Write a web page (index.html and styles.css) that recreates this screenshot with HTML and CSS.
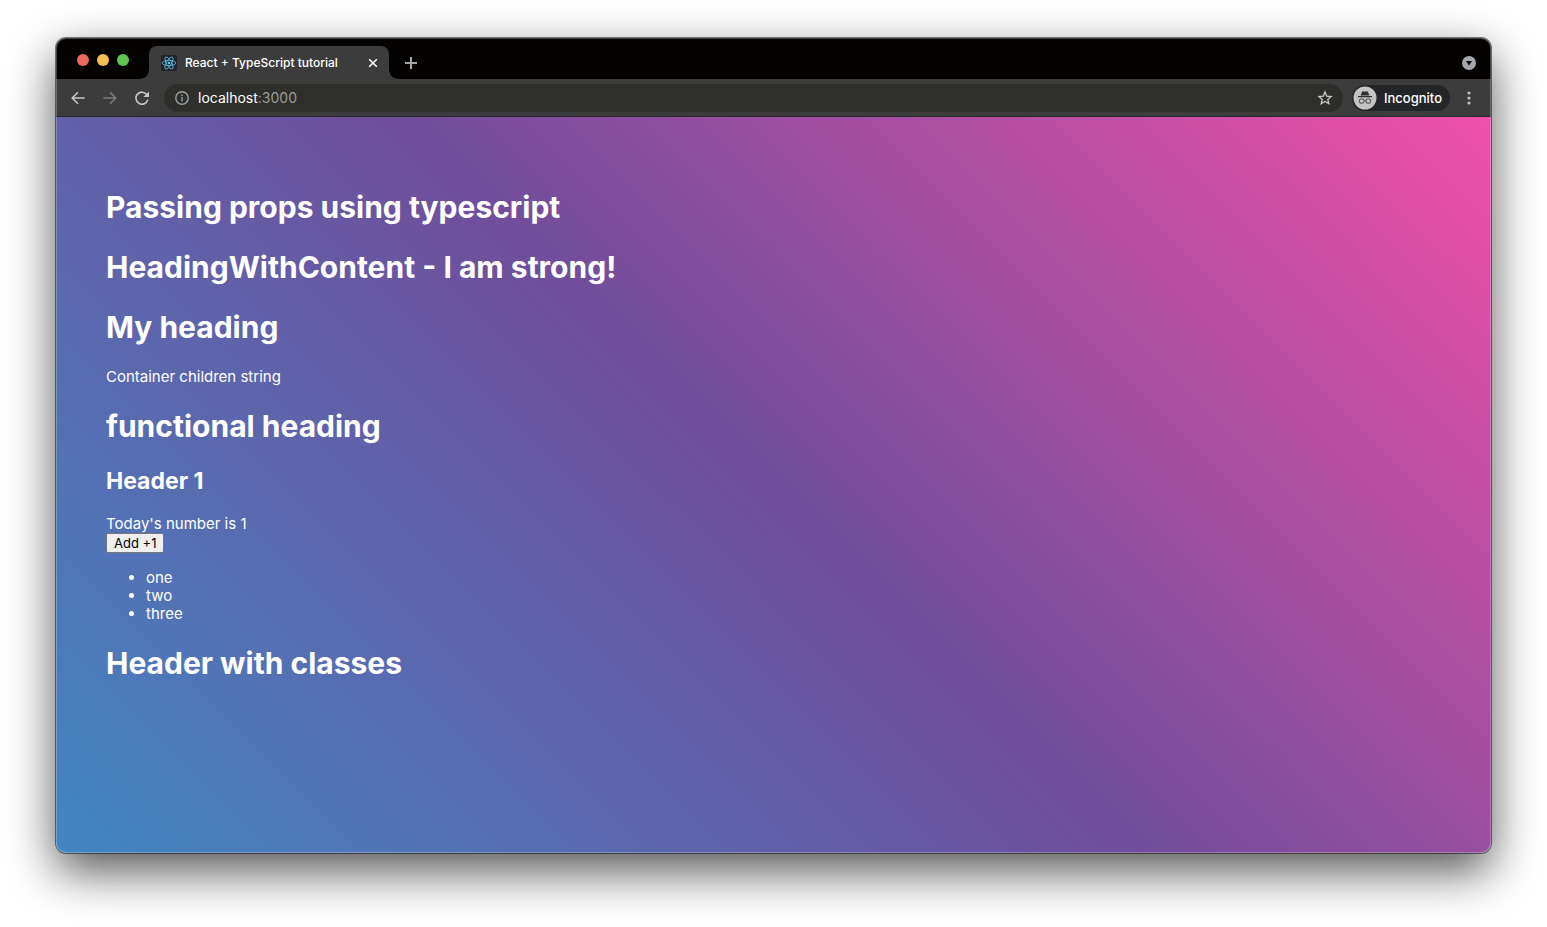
FILE: index.html
```html
<!DOCTYPE html>
<html lang="en">
<head>
<meta charset="utf-8">
<title>React + TypeScript tutorial</title>
<link rel="stylesheet" href="styles.css">
</head>
<body>
<div class="window">
  <header class="tabstrip">
    <div class="lights">
      <button class="light light-close" aria-label="Close window"></button>
      <button class="light light-min" aria-label="Minimize window"></button>
      <button class="light light-max" aria-label="Zoom window"></button>
    </div>
    <div class="tab">
      <svg class="favicon" viewBox="0 0 16 16" aria-hidden="true">
        <rect width="16" height="16" rx="1" fill="#20232a"/>
        <g fill="none" stroke="#5cc4e2" stroke-width=".8">
          <ellipse cx="8" cy="8" rx="6.8" ry="2.6"/>
          <ellipse cx="8" cy="8" rx="6.8" ry="2.6" transform="rotate(60 8 8)"/>
          <ellipse cx="8" cy="8" rx="6.8" ry="2.6" transform="rotate(120 8 8)"/>
        </g>
        <circle cx="8" cy="8" r="1.3" fill="#5cc4e2"/>
      </svg>
      <span class="tab-title">React + TypeScript tutorial</span>
      <button class="icon-btn tab-close" aria-label="Close tab">
        <svg width="10" height="10" viewBox="0 0 10 10"><path d="M1.200 1.200l7.600 7.600M8.800 1.200L1.200 8.800" stroke="#fff" stroke-width="1.600"/></svg>
      </button>
    </div>
    <button class="icon-btn new-tab" aria-label="New tab">
      <svg width="12" height="12" viewBox="0 0 12 12"><path d="M6 0v12M0 6h12" stroke="#a6a6a6" stroke-width="2"/></svg>
    </button>
    <button class="icon-btn tab-search" aria-label="Search tabs">
      <svg width="14" height="14" viewBox="0 0 14 14"><circle cx="7" cy="7" r="7" fill="#a4a7ab"/><path d="M4 5h6L7 9.600z" fill="#0c0c0c"/></svg>
    </button>
  </header>
  <nav class="toolbar">
    <button class="icon-btn nav-btn" aria-label="Back">
      <svg width="14" height="14" viewBox="0 0 14 14" fill="none" stroke="#c8c8c8" stroke-width="1.500"><path d="M13.600 7H1.400M7 1.200L1.200 7 7 12.800"/></svg>
    </button>
    <button class="icon-btn nav-btn" aria-label="Forward">
      <svg width="14" height="14" viewBox="0 0 14 14" fill="none" stroke="#7c7c7c" stroke-width="1.500"><path d="M.4 7h12.200M7 1.200L12.800 7 7 12.800"/></svg>
    </button>
    <button class="icon-btn nav-btn" aria-label="Reload">
      <svg width="14" height="14" viewBox="0 0 14 14"><path d="M12 3.900A6 6 0 1 0 12.800 8.600" fill="none" stroke="#c8c8c8" stroke-width="1.600"/><path d="M14 .4v5.600H8.400z" fill="#c8c8c8"/></svg>
    </button>
    <div class="address">
      <svg class="info" width="14" height="14" viewBox="0 0 14 14"><circle cx="7" cy="7" r="6.200" fill="none" stroke="#9aa0a6" stroke-width="1.400"/><path d="M7 6v4.400M7 3.400v1.500" stroke="#9aa0a6" stroke-width="1.400"/></svg>
      <span class="url"><span class="host">localhost</span>:3000</span>
      <button class="icon-btn star" aria-label="Bookmark this tab">
        <svg width="16" height="16" viewBox="0 0 16 16"><path d="M8 2l1.700 4.100 4.400.4-3.300 2.900 1 4.300L8 11.400l-3.800 2.300 1-4.300-3.300-2.900 4.400-.4z" fill="none" stroke="#c9c9c9" stroke-width="1.300"/></svg>
      </button>
    </div>
    <button class="incognito">
      <svg width="24" height="24" viewBox="0 0 24 24" aria-hidden="true">
        <circle cx="12" cy="12" r="11.500" fill="#c4c4c4"/>
        <path d="M9.200 5.400h5.600l1.600 4.200H7.600z" fill="#2f3033"/>
        <path d="M5 10.700h14" stroke="#2f3033" stroke-width="1.200"/>
        <g fill="none" stroke="#5c5d60" stroke-width="1.100"><circle cx="8.700" cy="15" r="2.300"/><circle cx="15.300" cy="15" r="2.300"/><path d="M11 14.600q1-.7 2 0"/></g>
      </svg>
      <span>Incognito</span>
    </button>
    <button class="icon-btn menu" aria-label="Menu">
      <svg width="4" height="14" viewBox="0 0 4 14" fill="#c0c0c0"><circle cx="2" cy="2" r="1.600"/><circle cx="2" cy="7" r="1.600"/><circle cx="2" cy="12" r="1.600"/></svg>
    </button>
  </nav>
  <main class="page">
    <h1>Passing props using typescript</h1>
    <h1>HeadingWithContent - <strong>I am strong!</strong></h1>
    <h1>My heading</h1>
    <p class="text">Container children string</p>
    <h1>functional heading</h1>
    <h2>Header 1</h2>
    <div class="counter">
      <p class="text">Today's number is 1</p>
      <button class="add">Add +1</button>
    </div>
    <ul class="list">
      <li>one</li>
      <li>two</li>
      <li>three</li>
    </ul>
    <h1>Header with classes</h1>
  </main>
</div>
</body>
</html>
```

FILE: styles.css
```css
* {
  box-sizing: border-box;
}

body {
  margin: 0;
  min-height: 100vh;
  padding: 38px 56px 74px;
  display: flex;
  background: #fff;
  color: #fff;
  font-family: Inter, "Liberation Sans", sans-serif;
}

button {
  font-family: inherit;
}

.window {
  position: relative;
  flex: 1;
  min-width: 0;
  display: flex;
  flex-direction: column;
  border-radius: 10px;
  overflow: hidden;
  box-shadow: 0 0 0 1px rgba(0, 0, 0, 0.5), 0 18px 48px rgba(0, 0, 0, 0.68);
}

.window::after {
  content: "";
  position: absolute;
  inset: 0;
  border-radius: 10px;
  box-shadow: inset 0 0 0 1px rgba(255, 255, 255, 0.25);
  pointer-events: none;
}

.icon-btn {
  display: flex;
  align-items: center;
  justify-content: center;
  padding: 0;
  border: 0;
  background: none;
}

.tabstrip {
  display: flex;
  height: 41px;
  padding: 8px 15px 0 21px;
  background: #040301;
}

.lights {
  display: flex;
  gap: 8px;
  margin: 8px 20px 0 0;
}

.light {
  width: 12px;
  height: 12px;
  padding: 0;
  border: 0;
  border-radius: 50%;
}

.light-close {
  background: #ed6a5e;
}

.light-min {
  background: #f5bf4f;
}

.light-max {
  background: #61c554;
}

.tab {
  position: relative;
  display: flex;
  align-items: center;
  width: 240px;
  padding: 0 10px 0 12px;
  border-radius: 8px 8px 0 0;
  background: #3c3c3c;
}

.tab::before,
.tab::after {
  content: "";
  position: absolute;
  bottom: 0;
  width: 8px;
  height: 8px;
}

.tab::before {
  right: 100%;
  background: radial-gradient(circle at 0 0, transparent 7px, #3c3c3c 8px);
}

.tab::after {
  left: 100%;
  background: radial-gradient(circle at 100% 0, transparent 7px, #3c3c3c 8px);
}

.favicon {
  width: 16px;
  height: 16px;
  margin-right: 8px;
}

.tab-title {
  flex: 1;
  font-size: 12px;
  font-weight: 500;
  white-space: nowrap;
}

.tab-close {
  width: 12px;
  height: 16px;
}

.new-tab {
  width: 28px;
  margin-left: 8px;
}

.tab-search {
  margin-left: auto;
}

.toolbar {
  display: flex;
  align-items: center;
  height: 38px;
  padding: 0 16px 0 8px;
  background: #3c3c3c;
  border-bottom: 1px solid #282828;
}

.nav-btn {
  width: 28px;
  height: 28px;
  margin-right: 4px;
}

.address {
  flex: 1;
  display: flex;
  align-items: center;
  height: 28px;
  margin: 0 9px 0 4px;
  padding: 0 10px 0 11px;
  border-radius: 14px;
  background: #2e2e2a;
}

.url {
  flex: 1;
  margin-left: 9px;
  font-size: 14px;
  color: #9c9c9a;
}

.host {
  color: #fff;
}

.incognito {
  display: flex;
  align-items: center;
  gap: 7px;
  height: 26px;
  padding: 0 8px 0 1px;
  border: 0;
  border-radius: 13px;
  background: #242528;
  color: #fff;
  font-size: 13px;
  font-weight: 500;
}

.menu {
  width: 12px;
  height: 28px;
  margin-left: 13px;
}

.page {
  flex: 1;
  padding: 50px;
  background: linear-gradient(45deg, #4286c4, #704e9b 50%, #f04fa8);
}

h1,
h2 {
  font-weight: 700;
}

h1 {
  margin: 21px 0;
  font-size: 30px;
  line-height: 39px;
}

h2 {
  margin: 20px 0;
  font-size: 23px;
  line-height: 28px;
}

strong {
  font-weight: inherit;
}

.text {
  margin: 0;
  font-size: 15px;
  line-height: 18px;
}

.add {
  display: block;
  height: 20px;
  padding: 0 7px;
  border: 1px solid #767676;
  border-radius: 2px;
  background: #efefef;
  color: #000;
  font-size: 13px;
  line-height: 18px;
}

.list {
  margin: 16px 0;
  padding-left: 40px;
  font-size: 15px;
  line-height: 18px;
}
```
